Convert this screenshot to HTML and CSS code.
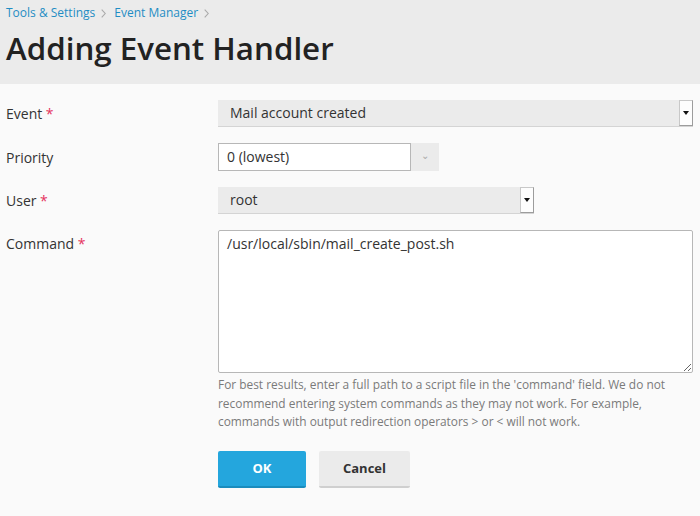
FILE: index.html
```html
<!DOCTYPE html>
<html lang="en">
  <head>
    <meta charset="UTF-8" />
    <meta name="viewport" content="width=device-width, initial-scale=1.0" />
    <title>Adding Event Handler</title>
    <link rel="stylesheet" href="styles.css">
  </head>
  <body>
    <header class="page-header">
      <nav class="breadcrumbs">
        <a href="#">Tools &amp; Settings</a>
        <svg class="crumb-sep" width="5" height="9" viewBox="0 0 5 9"><path d="M0.7 0.7 L4.2 4.5 L0.7 8.3" fill="none" stroke="#a9a9a9" stroke-width="1.1"/></svg>
        <a href="#">Event Manager</a>
        <svg class="crumb-sep" width="5" height="9" viewBox="0 0 5 9"><path d="M0.7 0.7 L4.2 4.5 L0.7 8.3" fill="none" stroke="#a9a9a9" stroke-width="1.1"/></svg>
      </nav>
      <h1 class="page-title">Adding Event Handler</h1>
    </header>

    <form class="handler-form">
      <div class="form-row">
        <label class="form-label">Event <span class="required">*</span></label>
        <div class="form-field">
          <div class="select select-wide">
            <span class="select-value">Mail account created</span>
            <span class="select-btn"><span class="select-arrow"></span></span>
          </div>
        </div>
      </div>

      <div class="form-row">
        <label class="form-label">Priority</label>
        <div class="form-field">
          <div class="combo">
            <span class="combo-value">0 (lowest)</span>
            <span class="combo-btn">&#8964;</span>
          </div>
        </div>
      </div>

      <div class="form-row">
        <label class="form-label">User <span class="required">*</span></label>
        <div class="form-field">
          <div class="select select-mid">
            <span class="select-value">root</span>
            <span class="select-btn"><span class="select-arrow"></span></span>
          </div>
        </div>
      </div>

      <div class="form-row form-row-top">
        <label class="form-label">Command <span class="required">*</span></label>
        <div class="form-field">
          <textarea class="command" name="command">/usr/local/sbin/mail_create_post.sh</textarea>
          <p class="hint">For best results, enter a full path to a script file in the 'command' field. We do not recommend entering system commands as they may not work. For example, commands with output redirection operators &gt; or &lt; will not work.</p>
        </div>
      </div>

      <div class="form-row">
        <span></span>
        <div class="form-field buttons">
          <button type="button" class="btn btn-primary">OK</button>
          <button type="button" class="btn">Cancel</button>
        </div>
      </div>
    </form>
  </body>
</html>
```

FILE: styles.css
```css
:root {
  --main-font: "Open Sans", "Noto Sans", sans-serif;
  --text-color: #333;
  --link-color: #1f8dc4;
  --header-bg: #ebebeb;
  --page-bg: #fafafa;
  --control-bg: #ebebeb;
  --primary: #24a6dd;
}

html {
  box-sizing: border-box;
  font-family: var(--main-font);
  font-size: 14px;
}

*,
*:before,
*:after {
  box-sizing: inherit;
}

body {
  margin: 0;
  background: var(--page-bg);
  color: var(--text-color);
}

.page-header {
  background: var(--header-bg);
  height: 84px;
  padding: 4px 6px 0;
}

.breadcrumbs {
  font-size: 12px;
  line-height: 18px;
  display: flex;
  align-items: center;
  gap: 0;
}

.breadcrumbs a {
  color: var(--link-color);
  text-decoration: none;
}

.crumb-sep {
  margin: 1px 8px 0 6px;
}

.page-title {
  margin: 6px 0 0;
  font-size: 31.3px;
  line-height: 40px;
  font-weight: 600;
  color: #222;
}

.handler-form {
  padding: 16px 7px 20px 6px;
}

.form-row {
  display: grid;
  grid-template-columns: 212px 1fr;
  align-items: center;
  margin-bottom: 16px;
}

.form-row-top {
  align-items: start;
}

.form-row-top .form-label {
  padding-top: 4px;
}

.form-label {
  font-size: 14px;
  color: #333;
}

.required {
  color: #e5335e;
}

.select {
  display: flex;
  height: 27px;
  background: var(--control-bg);
  border-bottom: 1px solid #d4d4d4;
}

.select-wide {
  width: 475px;
}

.select-mid {
  width: 316px;
}

.select-value {
  flex: 1;
  padding-left: 12px;
  line-height: 26px;
  font-size: 14px;
  color: #333;
}

.select-btn {
  width: 14px;
  margin: 0;
  border: 1px solid #9c9c9c;
  border-top-color: #c8c8c8;
  border-left-color: #c8c8c8;
  background: #fdfdfd;
  display: flex;
  align-items: center;
  justify-content: center;
}

.select-arrow {
  width: 0;
  height: 0;
  border-left: 3.5px solid transparent;
  border-right: 3.5px solid transparent;
  border-top: 4px solid #111;
}

.combo {
  display: flex;
  width: 221px;
  height: 28px;
}

.combo-value {
  width: 193px;
  background: #fff;
  border: 1px solid #b7b7b7;
  padding-left: 8px;
  line-height: 26px;
  font-size: 14px;
}

.combo-btn {
  flex: 1;
  background: var(--control-bg);
  color: #aaa;
  font-size: 10px;
  text-align: center;
  line-height: 24px;
}

.command {
  display: block;
  width: 100%;
  height: 143px;
  margin: 0;
  padding: 3px 8px;
  border: 1px solid #b7b7b7;
  border-radius: 2px;
  background: #fff;
  font-family: var(--main-font);
  font-size: 14px;
  line-height: 20px;
  color: #333;
}

.hint {
  margin: 2px 0 0;
  font-size: 11.9px;
  line-height: 18.5px;
  color: #7a7a7a;
  max-width: 455px;
}

.buttons {
  display: flex;
  gap: 13px;
  padding-top: 4px;
}

.btn {
  width: 91px;
  height: 37px;
  border: 0;
  border-bottom: 2px solid #cfcfcf;
  border-radius: 2px;
  background: var(--control-bg);
  font-family: var(--main-font);
  font-size: 13px;
  font-weight: 700;
  color: #333;
  cursor: pointer;
}

.btn-primary {
  width: 88px;
  background: var(--primary);
  border-bottom-color: #1a8cbd;
  color: #fff;
}
```
